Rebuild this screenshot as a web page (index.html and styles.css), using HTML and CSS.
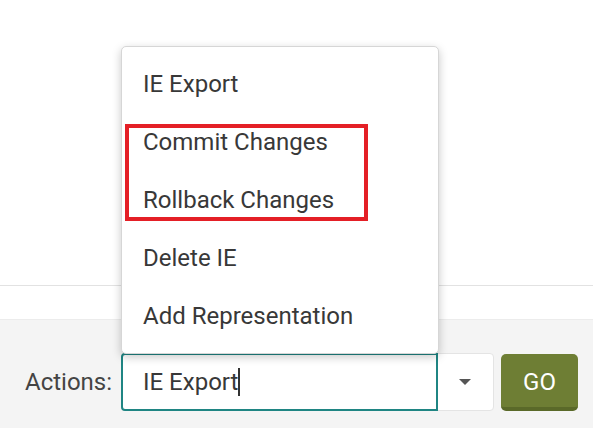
FILE: index.html
```html
<!DOCTYPE html>
<html>
<head>
<meta charset="utf-8">
<link rel="stylesheet" href="styles.css">
</head>
<body>
<div class="page">
  <div class="top"></div>
  <div class="band"></div>
  <div class="toolbar">
    <span class="label">Actions:</span>
    <div class="select">
      <div class="field"><span class="value">IE Export</span><span class="caret"></span></div>
      <div class="toggle"><span class="arrow"></span></div>
    </div>
    <button class="go">GO</button>
  </div>
  <ul class="menu">
    <li>IE Export</li>
    <li>Commit Changes</li>
    <li>Rollback Changes</li>
    <li>Delete IE</li>
    <li>Add Representation</li>
  </ul>
  <div class="highlight"></div>
</div>
</body>
</html>
```
FILE: styles.css
```css
* { box-sizing: border-box; }
html, body { margin: 0; padding: 0; }
body {
  width: 593px;
  height: 428px;
  overflow: hidden;
  font-family: Roboto, "Liberation Sans", sans-serif;
  color: #383838;
  background: #f4f4f4;
}
.page {
  position: relative;
  width: 593px;
  height: 428px;
  display: flex;
  flex-direction: column;
}
.top {
  height: 286px;
  background: #fff;
  border-bottom: 1px solid #e2e2e2;
}
.band {
  height: 34px;
  background: #fff;
  border-bottom: 1px solid #ececec;
}
.toolbar {
  flex: 1;
  background: #f4f4f4;
  display: flex;
  align-items: flex-start;
  padding: 33px 0 0 25px;
}
.label {
  font-size: 24px;
  line-height: 58px;
  color: #444;
  width: 96px;
}
.select {
  display: flex;
  height: 58px;
  width: 373px;
  background: #fff;
  border-radius: 4px;
  border: 1px solid #e4e4e4;
}
.field {
  width: 317px;
  height: 58px;
  margin: -1px 0 0 -1px;
  border: 2px solid #1f8583;
  border-radius: 4px 0 0 4px;
  display: flex;
  align-items: center;
  padding-left: 20px;
  font-size: 24px;
}
.caret {
  display: inline-block;
  width: 0;
  height: 28px;
  border-left: 2px solid #333;
}
.toggle {
  flex: 1;
  display: flex;
  align-items: center;
  justify-content: center;
}
.arrow {
  width: 0;
  height: 0;
  border-left: 6px solid transparent;
  border-right: 6px solid transparent;
  border-top: 6px solid #555;
  margin-left: -2px;
}
.go {
  margin-left: 7px;
  width: 77px;
  height: 57px;
  margin-top: 1px;
  background: #6e7e34;
  border: none;
  border-bottom: 4px solid #5a6929;
  border-radius: 5px;
  color: #fff;
  font-family: Roboto, "Liberation Sans", sans-serif;
  font-size: 24px;
  padding: 2px 0 0 0;
}
.menu {
  position: absolute;
  left: 121px;
  top: 46px;
  width: 318px;
  margin: 0;
  padding: 8px 0;
  list-style: none;
  background: #fff;
  border: 1px solid #d6d6d6;
  border-radius: 5px;
  box-shadow: 0 3px 10px rgba(0, 0, 0, 0.22);
}
.menu li {
  height: 58px;
  line-height: 58px;
  padding-left: 21px;
  font-size: 24px;
  color: #383838;
}
.highlight {
  position: absolute;
  left: 125px;
  top: 124px;
  width: 243px;
  height: 97px;
  border: 4px solid #e41f26;
}
```
